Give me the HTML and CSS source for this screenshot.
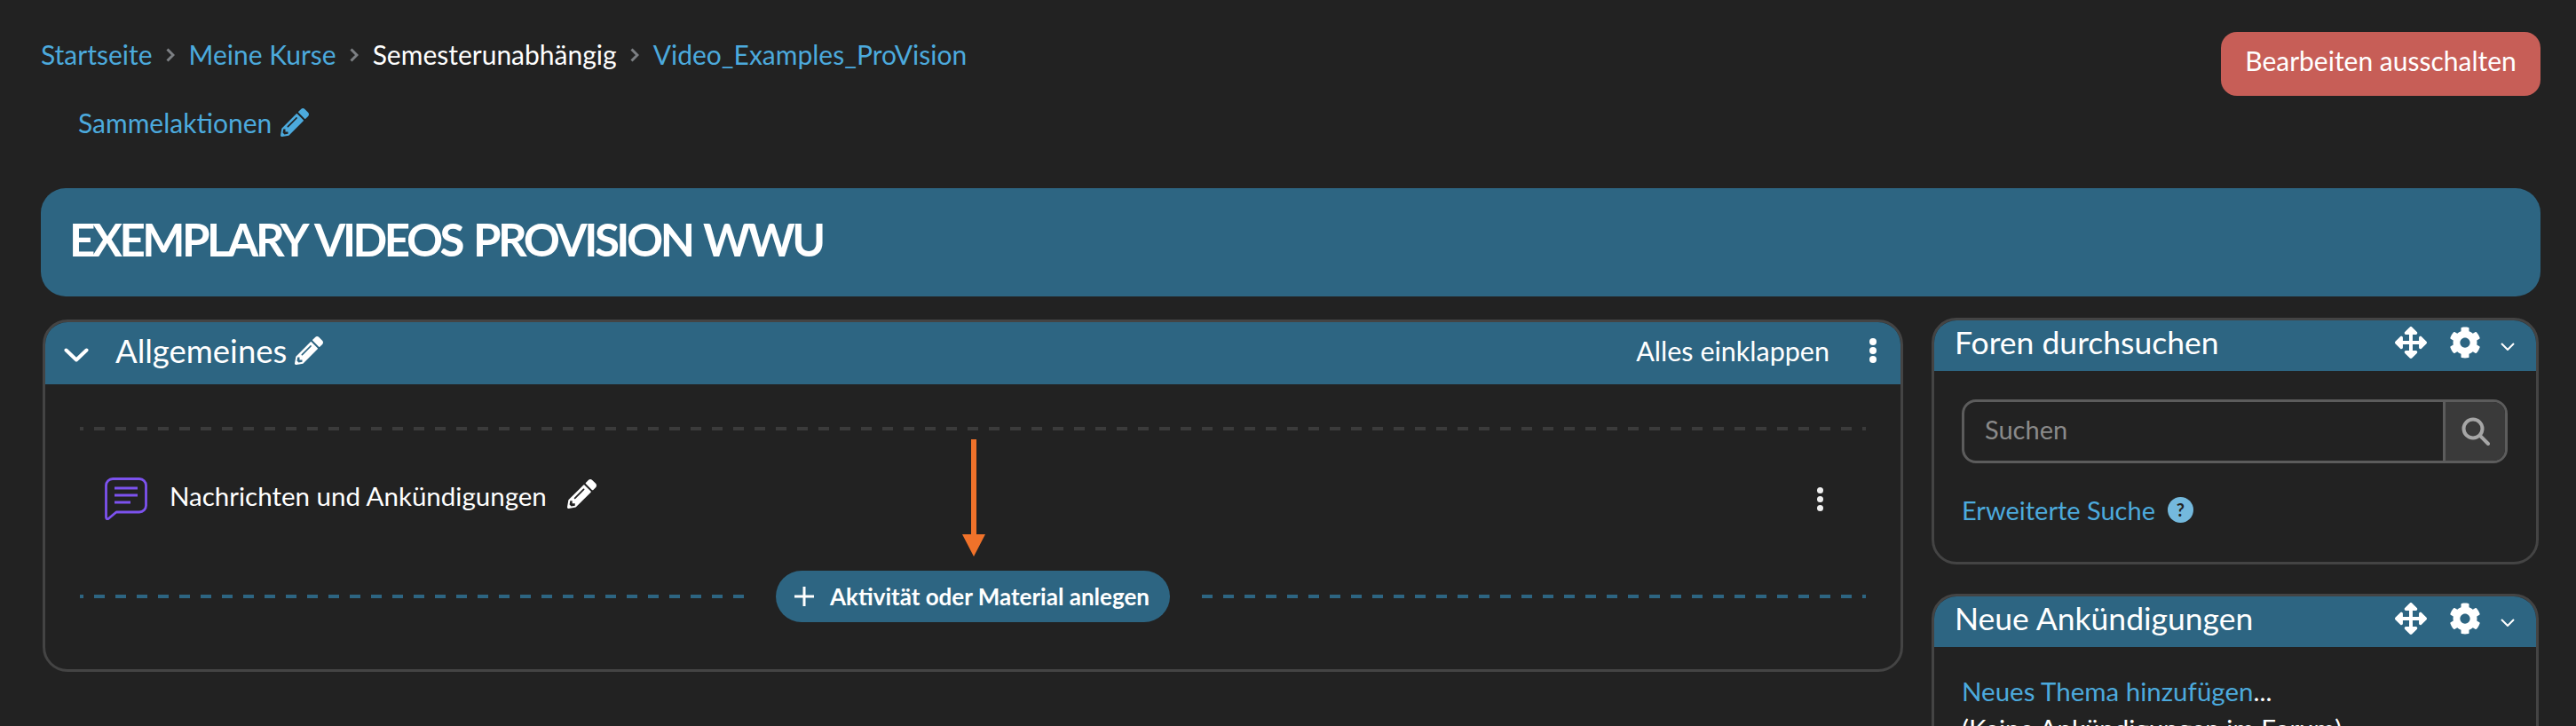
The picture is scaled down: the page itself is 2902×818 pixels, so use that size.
FILE: index.html
```html
<!DOCTYPE html>
<html lang="de">
<head>
	<title>Video_Examples_ProVision</title>
	<meta charset="utf-8">
	<link rel="stylesheet" href="styles.css">
</head>
<body>
	<svg class="defs" width="0" height="0">
		<symbol id="pencil" viewBox="0 0 512 512"><path d="M497.9 142.1l-46.1 46.1c-4.7 4.7-12.3 4.7-17 0l-111-111c-4.7-4.7-4.7-12.3 0-17l46.1-46.1c18.7-18.7 49.1-18.7 67.9 0l60.1 60.1c18.8 18.7 18.8 49.1 0 67.9zM284.2 99.8L21.6 362.4.4 483.9c-2.9 16.4 11.4 30.6 27.8 27.8l121.5-21.3 262.6-262.6c4.7-4.7 4.7-12.3 0-17l-111-111c-4.8-4.7-12.4-4.7-17.1 0zM124.1 339.9c-5.5-5.5-5.5-14.3 0-19.8l154-154c5.5-5.5 14.3-5.5 19.8 0s5.5 14.3 0 19.8l-154 154c-5.5 5.5-14.3 5.5-19.8 0zM88 424h48v36.3l-64.5 11.3-31.1-31.1L51.7 376H88v48z"/></symbol>
		<symbol id="move" viewBox="0 0 512 512"><path d="M352.201 425.775l-79.196 79.196c-9.373 9.373-24.568 9.373-33.941 0l-79.196-79.196c-15.119-15.119-4.411-40.971 16.971-40.97h51.162L228 284H127.196v51.162c0 21.382-25.851 32.09-40.971 16.971L7.029 272.937c-9.373-9.373-9.373-24.569 0-33.941L86.225 159.8c15.119-15.119 40.971-4.411 40.971 16.971V228H228V127.196h-51.23c-21.382 0-32.09-25.851-16.971-40.971l79.196-79.196c9.373-9.373 24.568-9.373 33.941 0l79.196 79.196c15.119 15.119 4.411 40.971-16.971 40.971h-51.162V228h100.804v-51.162c0-21.382 25.851-32.09 40.97-16.971l79.196 79.196c9.373 9.373 9.373 24.569 0 33.941L425.773 352.2c-15.119 15.119-40.971 4.411-40.97-16.971V284H284v100.804h51.23c21.382 0 32.09 25.851 16.971 40.971z"/></symbol>
		<symbol id="gear" viewBox="0 0 512 512"><path d="M487.4 315.7l-42.6-24.6c4.3-23.2 4.3-47 0-70.2l42.6-24.6c4.9-2.8 7.1-8.6 5.5-14-11.1-35.6-30-67.8-54.7-94.6-3.8-4.1-10-5.1-14.8-2.3L380.8 110c-17.9-15.4-38.5-27.3-60.8-35.1V25.8c0-5.6-3.9-10.5-9.4-11.7-36.7-8.2-74.3-7.8-109.2 0-5.5 1.2-9.4 6.1-9.4 11.7V75c-22.2 7.9-42.8 19.8-60.8 35.1L88.7 85.5c-4.9-2.8-11-1.9-14.8 2.3-24.7 26.7-43.6 58.9-54.7 94.6-1.7 5.4.6 11.2 5.5 14L67.3 221c-4.3 23.2-4.3 47 0 70.2l-42.6 24.6c-4.9 2.8-7.1 8.6-5.5 14 11.1 35.6 30 67.8 54.7 94.6 3.8 4.1 10 5.1 14.8 2.3l42.6-24.6c17.9 15.4 38.5 27.3 60.8 35.1v49.2c0 5.6 3.9 10.5 9.4 11.7 36.7 8.2 74.3 7.8 109.2 0 5.5-1.2 9.4-6.1 9.4-11.7v-49.2c22.2-7.9 42.8-19.8 60.8-35.1l42.6 24.6c4.9 2.8 11 1.9 14.8-2.3 24.7-26.7 43.6-58.9 54.7-94.6 1.5-5.5-.7-11.3-5.6-14.1zM256 336c-44.1 0-80-35.9-80-80s35.9-80 80-80 80 35.9 80 80-35.9 80-80 80z"/></symbol>
		<symbol id="small-chevron" viewBox="0 0 16 9"><path d="M1 1l7 7 7-7" fill="none" stroke="currentColor" stroke-width="2"/></symbol>
		<symbol id="crumb-chevron" viewBox="0 0 10 16"><path d="M1.500 1.500L8 8l-6.500 6.500" fill="none" stroke="currentColor" stroke-width="3"/></symbol>
	</svg>

	<div class="page">
		<!-- Kopfzeile -->
		<div class="top-row">
			<nav class="crumbs">
				<a href="#">Startseite</a>
				<span class="sep"><svg class="sep-icon"><use href="#crumb-chevron"/></svg></span>
				<a href="#">Meine Kurse</a>
				<span class="sep"><svg class="sep-icon"><use href="#crumb-chevron"/></svg></span>
				<span class="current">Semesterunabhängig</span>
				<span class="sep"><svg class="sep-icon"><use href="#crumb-chevron"/></svg></span>
				<a href="#">Video_Examples_ProVision</a>
			</nav>
			<a class="edit-btn" href="#">Bearbeiten ausschalten</a>
		</div>

		<a class="bulk" href="#">Sammelaktionen <svg class="bulk-pencil"><use href="#pencil"/></svg></a>

		<header class="course-head">
			<h1>EXEMPLARY VIDEOS PROVISION WWU</h1>
		</header>

		<div class="main">
			<!-- Kursabschnitt -->
			<section class="course-col">
				<div class="section-card">
					<div class="section-head">
						<svg class="section-chevron" viewBox="0 0 28 16"><path d="M2.500 2.500L14 13.500 25.500 2.500" fill="none" stroke="#fff" stroke-width="4" stroke-linecap="round" stroke-linejoin="round"/></svg>
						<h2>Allgemeines</h2>
						<svg class="head-pencil"><use href="#pencil"/></svg>
						<a class="collapse" href="#">Alles einklappen</a>
						<span class="kebab"><i></i><i></i><i></i></span>
					</div>
					<div class="section-body">
						<div class="dash-grey"></div>
						<div class="activity">
							<svg class="forum-icon" viewBox="0 0 48 48">
								<path d="M1.500 44.500V9A7.500 7.500 0 0 1 9 1.500h30A7.500 7.500 0 0 1 46.500 9v22.500A7.500 7.500 0 0 1 39 39H13L4 46.500Q1.500 47.500 1.500 44.500z" fill="none" stroke="#7c52ee" stroke-width="2.800" stroke-linejoin="round"/>
								<path d="M11 12h26M11 20h26M11 28h18" fill="none" stroke="#7c52ee" stroke-width="2.800"/>
							</svg>
							<a class="activity-name" href="#">Nachrichten und Ankündigungen</a>
							<svg class="activity-pencil"><use href="#pencil"/></svg>
							<span class="kebab small"><i></i><i></i><i></i></span>
						</div>
						<div class="add-row">
							<div class="dash-blue first"></div>
							<a class="add-btn" href="#">
								<svg class="plus" viewBox="0 0 22 22"><path d="M11 0v22M0 11h22" stroke="#fff" stroke-width="3"/></svg>
								Aktivität oder Material anlegen
							</a>
							<div class="dash-blue"></div>
						</div>
					</div>
				</div>
				<!-- Pfeil (Markierung im Screenshot) -->
				<svg class="arrow" viewBox="0 0 26 132"><path d="M10 0h6v107h10L13 132 0 107h10z" fill="#f0722a"/></svg>
			</section>

			<aside class="side-col">
				<div class="block">
					<div class="block-head">
						<h3>Foren durchsuchen</h3>
						<svg class="tool"><use href="#move"/></svg>
						<svg class="tool"><use href="#gear"/></svg>
						<svg class="tiny"><use href="#small-chevron"/></svg>
					</div>
					<div class="block-body">
						<div class="search">
							<span class="placeholder">Suchen</span>
							<span class="search-btn">
								<svg class="lens" viewBox="0 0 32 32"><circle cx="13" cy="13" r="10.500" fill="none" stroke="#a6a6a6" stroke-width="4"/><path d="M21 21l9 9" stroke="#a6a6a6" stroke-width="4" stroke-linecap="round"/></svg>
							</span>
						</div>
						<p class="search-link"><a href="#">Erweiterte Suche</a><span class="help">?</span></p>
					</div>
				</div>

				<div class="block">
					<div class="block-head">
						<h3>Neue Ankündigungen</h3>
						<svg class="tool"><use href="#move"/></svg>
						<svg class="tool"><use href="#gear"/></svg>
						<svg class="tiny"><use href="#small-chevron"/></svg>
					</div>
					<div class="block-body news">
						<p><a href="#">Neues Thema hinzufügen</a>...</p>
						<p>(Keine Ankündigungen im Forum)</p>
					</div>
				</div>
			</aside>
		</div>
	</div>
</body>
</html>
```

FILE: styles.css
```css
html, body {
	margin: 0;
	height: 100%;
	overflow: hidden;
	background-color: #222222;
}
body {
	font-family: "Lato", "Noto Sans", sans-serif;
	font-size: 30px;
	color: #ffffff;
}
a {
	color: #4caadd;
	text-decoration: none;
}
h1, h2, h3, p {
	margin: 0;
	font-weight: 400;
}
.defs {
	position: absolute;
}
svg {
	fill: currentColor;
	flex: none;
}

.page {
	padding: 36px 40px 0 46px;
}

/* Kopfzeile */
.top-row {
	display: flex;
	justify-content: space-between;
	align-items: flex-start;
	height: 72px;
}
.crumbs {
	display: flex;
	align-items: center;
	height: 50px;
	white-space: nowrap;
}
.sep {
	display: flex;
	justify-content: center;
	width: 41px;
	color: #7c7f83;
}
.sep-icon {
	width: 10px;
	height: 16px;
	margin-top: 2px;
}
.edit-btn {
	display: flex;
	align-items: center;
	justify-content: center;
	box-sizing: border-box;
	width: 360px;
	height: 72px;
	padding-bottom: 8px;
	border-radius: 18px;
	background-color: #c75e57;
	color: #ffffff;
}
.bulk {
	display: flex;
	align-items: center;
	gap: 10px;
	height: 50px;
	margin: 5px 0 0 42px;
}
.bulk-pencil {
	width: 32px;
	height: 32px;
}

.course-head {
	display: flex;
	align-items: center;
	box-sizing: border-box;
	height: 122px;
	margin-top: 49px;
	padding: 0 0 8px 32px;
	border-radius: 28px;
	background-color: #2d6582;
}
.course-head h1 {
	font-size: 51px;
	font-weight: 700;
	letter-spacing: -3.500px;
	word-spacing: 4px;
	white-space: nowrap;
}

.main {
	display: flex;
	gap: 32px;
	margin-top: 24px;
}

/* Kursabschnitt */
.course-col {
	position: relative;
	width: 2098px;
	padding: 2px 0 0 2px;
	box-sizing: border-box;
}
.section-card {
	border: 3px solid #444444;
	border-radius: 28px;
	overflow: hidden;
}
.section-head {
	display: flex;
	align-items: center;
	box-sizing: border-box;
	height: 70px;
	padding: 0 27px 7px 21px;
	background-color: #2d6582;
}
.section-chevron {
	width: 28px;
	height: 16px;
	margin-top: 11px;
}
.section-head h2 {
	margin-left: 30px;
	font-size: 36.500px;
}
.head-pencil {
	width: 32px;
	height: 32px;
	margin-left: 9px;
}
.collapse {
	margin-left: auto;
	color: #ffffff;
	font-size: 30.500px;
}
.kebab {
	display: flex;
	flex-direction: column;
	gap: 2px;
	margin-left: 45px;
}
.kebab i {
	width: 8px;
	height: 8px;
	border-radius: 50%;
	background-color: #ffffff;
}
.section-body {
	padding: 48px 39px 53px;
}
.dash-grey, .dash-blue {
	height: 4px;
	background: repeating-linear-gradient(90deg, #3b3b3b 0 4px, transparent 4px 16px, #3b3b3b 16px 24px);
}
.dash-blue {
	flex: 1;
	background: repeating-linear-gradient(90deg, #2d6582 0 12px, transparent 12px 24px);
}
.dash-blue.first {
	background: repeating-linear-gradient(90deg, #2d6582 0 4px, transparent 4px 16px, #2d6582 16px 24px);
}
.activity {
	display: flex;
	align-items: center;
	height: 48px;
	margin-top: 53px;
	padding: 0 48px 0 28px;
}
.forum-icon {
	width: 48px;
	height: 48px;
}
.activity-name {
	margin: 0 0 8px 25px;
	color: #ffffff;
	font-size: 29.500px;
}
.activity-pencil {
	width: 33px;
	height: 33px;
	margin: 0 0 12px 23px;
}
.kebab.small {
	margin: 0 0 0 auto;
	gap: 3px;
}
.kebab.small i {
	width: 7px;
	height: 7px;
	background-color: #eeeeee;
}
.add-row {
	display: flex;
	align-items: center;
	gap: 36px;
	margin-top: 57px;
}
.add-btn {
	display: flex;
	align-items: center;
	gap: 18px;
	box-sizing: border-box;
	width: 444px;
	height: 58px;
	padding-left: 21px;
	border-radius: 29px;
	background-color: #2d6582;
	color: #ffffff;
	font-size: 26px;
	font-weight: 700;
	white-space: nowrap;
}
.plus {
	width: 22px;
	height: 22px;
}
.arrow {
	position: absolute;
	left: 1038px;
	top: 137px;
	width: 26px;
	height: 132px;
}

/* Blöcke rechts */
.side-col {
	display: flex;
	flex-direction: column;
	gap: 33px;
	width: 684px;
}
.block {
	border: 3px solid #444444;
	border-radius: 28px;
	overflow: hidden;
}
.block-head {
	display: flex;
	align-items: center;
	box-sizing: border-box;
	height: 57px;
	padding: 0 24px 7px 23px;
	background-color: #2d6582;
}
.block-head h3 {
	flex: 1;
	margin-bottom: 2px;
	font-size: 35.500px;
}
.tool {
	width: 36px;
	height: 36px;
	margin-left: 25px;
}
.tiny {
	width: 16px;
	height: 9px;
	margin: 8px 0 0 22px;
}
.block-body {
	height: 215px;
	padding: 32px 32px 0 31px;
	box-sizing: border-box;
}
.search {
	display: flex;
	height: 72px;
	box-sizing: border-box;
	border: 3px solid #5c5c5c;
	border-radius: 16px;
	overflow: hidden;
}
.placeholder {
	flex: 1;
	padding: 0 23px;
	line-height: 62px;
	color: #8a8a8a;
	font-size: 29px;
}
.search-btn {
	display: flex;
	align-items: center;
	justify-content: center;
	box-sizing: border-box;
	width: 70px;
	border-left: 3px solid #5c5c5c;
	background-color: #3a3a3a;
}
.lens {
	width: 32px;
	height: 32px;
}
.search-link {
	display: flex;
	align-items: center;
	gap: 14px;
	margin-top: 35px;
	font-size: 29px;
}
.help {
	width: 29px;
	height: 29px;
	border-radius: 50%;
	background-color: #74b9dd;
	color: #222222;
	font-size: 20px;
	font-weight: 700;
	line-height: 29px;
	text-align: center;
}
.news {
	padding-top: 29px;
	font-size: 29.500px;
}
.news p {
	line-height: 42px;
}
```
